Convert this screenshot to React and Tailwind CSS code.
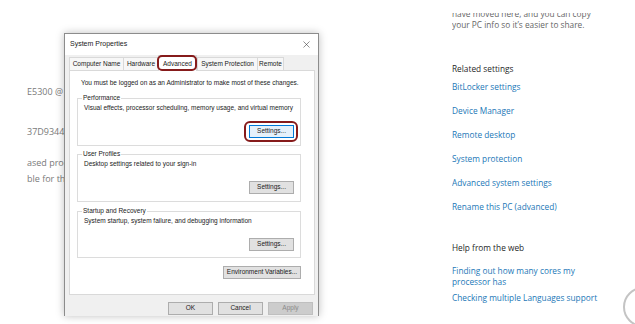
import { X } from 'lucide-react';

const relatedLinks = [
  'BitLocker settings',
  'Device Manager',
  'Remote desktop',
  'System protection',
  'Advanced system settings',
  'Rename this PC (advanced)',
];

const tabs = [
  { label: 'Computer Name', w: 'w-[54px]' },
  { label: 'Hardware', w: 'w-[35px]' },
  { label: 'Advanced', w: 'w-[39px]', active: true },
  { label: 'System Protection', w: 'w-[60px]' },
  { label: 'Remote', w: 'w-[27px]' },
];

function WinButton({ children, w = 'w-[45px]', focused, disabled, annotate }) {
  const tone = disabled
    ? 'bg-[#cccccc] border-[#bfbfbf] text-[#8a8a8a]'
    : focused
      ? 'bg-[#e5f1fb] border-[#0078d7] text-[#1a1a1a]'
      : 'bg-[#e1e1e1] border-[#adadad] text-[#1a1a1a]';
  return (
    <div className={`relative ${w} h-[13px] shrink-0 border ${tone} flex items-center justify-center text-[6.5px] leading-none`}>
      {children}
      {annotate && (
        <span className="absolute -left-[6px] -right-[5px] -top-[5px] -bottom-[5px] border-2 border-[#861b1b] rounded-[6px]" />
      )}
    </div>
  );
}

function GroupBox({ title, text, h, className = '' }) {
  return (
    <fieldset className={`${h} border border-[#dcdcdc] px-[6px] flex flex-col ${className}`}>
      <legend className="-ml-[2px] px-[1px] text-[6.5px] leading-[10px] text-[#1a1a1a]">{title}</legend>
      <p className="text-[6.5px] leading-[10px] text-[#1a1a1a]">{text}</p>
      <div className="flex justify-end mt-[12px]">
        <WinButton focused={title === 'Performance'} annotate={title === 'Performance'}>
          Settings...
        </WinButton>
      </div>
    </fieldset>
  );
}

function SystemProperties() {
  return (
    <div className="absolute left-[64px] top-[33px] w-[255px] h-[283px] overflow-hidden border border-b-0 border-[#8c8c8c] bg-[#f0f0f0] shadow-[0_0_8px_rgba(0,0,0,0.25)] font-['Liberation_Sans',Arial,sans-serif]">
      {/* title bar */}
      <div className="h-[21px] bg-white flex items-center justify-between pl-[5px] pr-[6px]">
        <span className="text-[7px] text-[#1a1a1a]">System Properties</span>
        <X size={11} strokeWidth={1.2} className="text-[#333]" />
      </div>

      <div className="pl-[4px] pr-[4px]">
        {/* tabs */}
        <div className="flex items-end h-[13px] mt-[2px] relative z-10">
          {tabs.map((t) =>
            t.active ? (
              <div
                key={t.label}
                className={`relative ${t.w} h-[16px] -mb-[1px] bg-white border border-b-0 border-[#d9d9d9] flex items-center justify-center text-[6.5px] text-[#1a1a1a]`}
              >
                {t.label}
                <span className="absolute -left-[2px] -right-[1px] -top-[1px] bottom-0 border-2 border-[#861b1b] rounded-[5px]" />
              </div>
            ) : (
              <div
                key={t.label}
                className={`${t.w} h-[13px] bg-[#f7f7f7] border border-b-0 border-r-0 last:border-r border-[#d9d9d9] flex items-center justify-center text-[6.5px] text-[#1a1a1a]`}
              >
                {t.label}
              </div>
            ),
          )}
        </div>

        {/* tab panel */}
        <div className="w-[246px] h-[225px] bg-white border border-[#d9d9d9] pt-[7px] pl-[7px]">
          <p className="pl-[4px] text-[6.5px] leading-[10px] text-[#1a1a1a]">
            You must be logged on as an Administrator to make most of these changes.
          </p>
          <div className="w-[224px] flex flex-col">
            <GroupBox
              title="Performance"
              text="Visual effects, processor scheduling, memory usage, and virtual memory"
              h="h-[53px]"
              className="mt-[5px]"
            />
            <GroupBox
              title="User Profiles"
              text="Desktop settings related to your sign-in"
              h="h-[53px]"
              className="mt-[3px]"
            />
            <GroupBox
              title="Startup and Recovery"
              text="System startup, system failure, and debugging information"
              h="h-[52px]"
              className="mt-[4px]"
            />
            <div className="flex justify-end mt-[8px]">
              <WinButton w="w-[78px]">Environment Variables...</WinButton>
            </div>
          </div>
        </div>

        {/* dialog buttons */}
        <div className="flex justify-end gap-[5px] mt-[7px] pr-[1px]">
          <WinButton>OK</WinButton>
          <WinButton>Cancel</WinButton>
          <WinButton disabled>Apply</WinButton>
        </div>
      </div>
    </div>
  );
}

export default function App() {
  return (
    <div className="relative w-[635px] h-[324px] overflow-hidden bg-white font-['Open_Sans','Noto_Sans',sans-serif]">
      <div className="flex h-full">
        {/* About page, left column (mostly behind the dialog) */}
        <div className="w-[452px] shrink-0 pl-[27px] pt-[84px] text-[9px] leading-[16px] text-[#7a7a7a] whitespace-nowrap">
          <p>E5300 @ 2.60GHz 2.60 GHz</p>
          <p className="mt-[24px]">37D93442-A1C5-4E8B-9F01</p>
          <p className="mt-[15px]">ased processor</p>
          <p>ble for this display</p>
        </div>

        {/* About page, right column */}
        <div className="flex-1 pt-[13px]">
          <div className="h-full overflow-hidden">
            <div className="-mt-[5px] text-[8.3px]">
              <p className="leading-[11px] text-[#666]">
                have moved here, and you can copy
                <br />
                your PC info so it’s easier to share.
              </p>
              <p className="mt-[31px] leading-[16px] text-[#1f1f1f]">Related settings</p>
              <ul className="mt-[2px] flex flex-col gap-[8px]">
                {relatedLinks.map((l) => (
                  <li key={l} className="leading-[16px] text-[#2277b7]">{l}</li>
                ))}
              </ul>
              <p className="mt-[25px] leading-[16px] text-[#1f1f1f]">Help from the web</p>
              <p className="mt-[9px] leading-[11px] text-[#2277b7]">
                Finding out how many cores my
                <br />
                processor has
              </p>
              <p className="mt-[3px] leading-[16px] text-[#2277b7]">Checking multiple Languages support</p>
            </div>
          </div>
        </div>
      </div>

      <SystemProperties />

      {/* floating round button, bottom right */}
      <div className="absolute left-[623px] top-[287px] w-[40px] h-[40px] rounded-full border-2 border-[#c4c4c4] bg-white" />
    </div>
  );
}
